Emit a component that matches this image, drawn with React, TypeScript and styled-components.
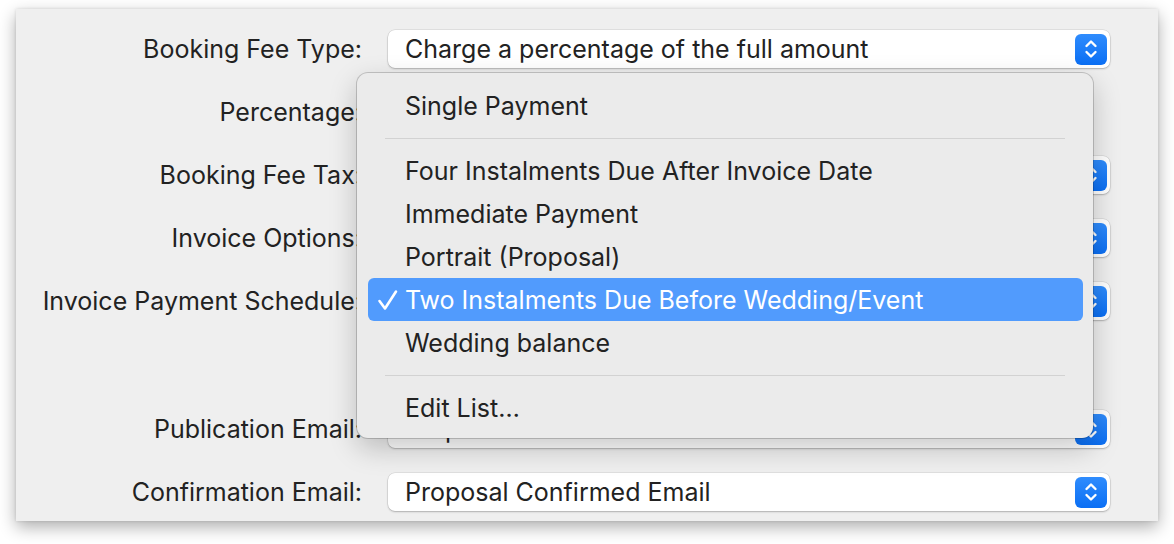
import React from "react";
import styled, { createGlobalStyle } from "styled-components";

const Global = createGlobalStyle`
  html, body { margin: 0; padding: 0; background: #ffffff; }
  body { font-family: Inter, "Noto Sans", "Liberation Sans", sans-serif; -webkit-font-smoothing: antialiased; }
`;

const Stage = styled.div`
  width: 1174px;
  height: 544px;
  box-sizing: border-box;
  padding: 9px 16px 23px 16px;
  background: #ffffff;
`;

const Window = styled.div`
  position: relative;
  width: 1142px;
  height: 512px;
  background: #efefef;
  box-shadow: 0 6px 16px rgba(0, 0, 0, 0.32), 0 0 3px rgba(0, 0, 0, 0.12);
`;

const Form = styled.div`
  display: grid;
  grid-template-columns: 330px 722px;
  grid-template-rows: 38px 38px 38px 38px 38px 40px 38px 38px;
  column-gap: 26px;
  row-gap: 25px;
  padding: 21px 0 0 16px;
`;

const Label = styled.div`
  display: flex;
  align-items: center;
  justify-content: flex-end;
  font-size: 25px;
  color: #222222;
  white-space: nowrap;
`;

const Cell = styled.div`
  display: flex;
  align-items: center;
`;

const Popup = styled.div`
  position: relative;
  box-sizing: border-box;
  width: 100%;
  height: 38px;
  display: flex;
  align-items: center;
  justify-content: space-between;
  padding: 0 3px 0 17px;
  background: #ffffff;
  border-radius: 7px;
  box-shadow: 0 0 0 0.5px rgba(0, 0, 0, 0.12), 0 1px 2px rgba(0, 0, 0, 0.22);
  font-size: 25px;
  color: #222222;
  white-space: nowrap;
`;

const TextField = styled.div`
  width: 140px;
  height: 34px;
  background: #ffffff;
  box-shadow: 0 0 0 1px rgba(0, 0, 0, 0.15);
`;

const Stepper = styled.div`
  width: 32px;
  height: 31px;
  border-radius: 6px;
  background: linear-gradient(#2f8cfd, #0b6ff4);
  display: flex;
  align-items: center;
  justify-content: center;
  flex-shrink: 0;
`;

const Menu = styled.div`
  position: absolute;
  left: 341px;
  top: 64px;
  width: 736px;
  box-sizing: border-box;
  padding: 11px 10px 9px 11px;
  background: #ebebeb;
  border-radius: 11px;
  box-shadow: 0 0 0 1px rgba(0, 0, 0, 0.18), 0 10px 28px rgba(0, 0, 0, 0.22);
  display: flex;
  flex-direction: column;
`;

const Item = styled.div<{ $selected?: boolean }>`
  position: relative;
  height: 43px;
  display: flex;
  align-items: center;
  padding-left: 37px;
  border-radius: 6px;
  font-size: 25px;
  white-space: nowrap;
  color: ${(p) => (p.$selected ? "#ffffff" : "#222222")};
  background: ${(p) => (p.$selected ? "#519bfd" : "transparent")};
`;

const Check = styled.svg`
  position: absolute;
  left: 9px;
  top: 11px;
`;

const Separator = styled.div`
  height: 22px;
  display: flex;
  align-items: center;
  padding: 0 18px 0 17px;
  &::after {
    content: "";
    flex: 1;
    height: 1px;
    background: #d2d2d2;
  }
`;

const Chevrons = () => (
  <svg width="14" height="22" viewBox="0 0 14 22">
    <path d="M2.5 8 L7 3.5 L11.5 8" fill="none" stroke="#fff" strokeWidth="2.4" strokeLinecap="round" strokeLinejoin="round" />
    <path d="M2.5 14 L7 18.5 L11.5 14" fill="none" stroke="#fff" strokeWidth="2.4" strokeLinecap="round" strokeLinejoin="round" />
  </svg>
);

const PopupButton = ({ text }: { text: string }) => (
  <Popup>
    <span>{text}</span>
    <Stepper>
      <Chevrons />
    </Stepper>
  </Popup>
);

const rows: { label: string; control: React.ReactNode }[] = [
  { label: "Booking Fee Type:", control: <PopupButton text="Charge a percentage of the full amount" /> },
  { label: "Percentage:", control: <TextField /> },
  { label: "Booking Fee Tax:", control: <PopupButton text="No Tax" /> },
  { label: "Invoice Options:", control: <PopupButton text="Standard" /> },
  { label: "Invoice Payment Schedule:", control: <PopupButton text="Two Instalments Due Before Wedding/Event" /> },
  { label: "", control: null },
  { label: "Publication Email:", control: <PopupButton text="Proposal Publication Email" /> },
  { label: "Confirmation Email:", control: <PopupButton text="Proposal Confirmed Email" /> },
];

export default function App() {
  return (
    <>
      <Global />
      <Stage>
        <Window>
          <Form>
            {rows.map((r, i) => (
              <React.Fragment key={i}>
                <Label>{r.label}</Label>
                <Cell>{r.control}</Cell>
              </React.Fragment>
            ))}
          </Form>
          <Menu>
            <Item>Single Payment</Item>
            <Separator />
            <Item>Four Instalments Due After Invoice Date</Item>
            <Item>Immediate Payment</Item>
            <Item>Portrait (Proposal)</Item>
            <Item $selected>
              <Check width="22" height="22" viewBox="0 0 22 22">
                <path d="M2.5 12 L8 19.5 L19 2.5" fill="none" stroke="#fff" strokeWidth="2.6" strokeLinecap="round" strokeLinejoin="round" />
              </Check>
              Two Instalments Due Before Wedding/Event
            </Item>
            <Item>Wedding balance</Item>
            <Separator />
            <Item>Edit List…</Item>
          </Menu>
        </Window>
      </Stage>
    </>
  );
}
